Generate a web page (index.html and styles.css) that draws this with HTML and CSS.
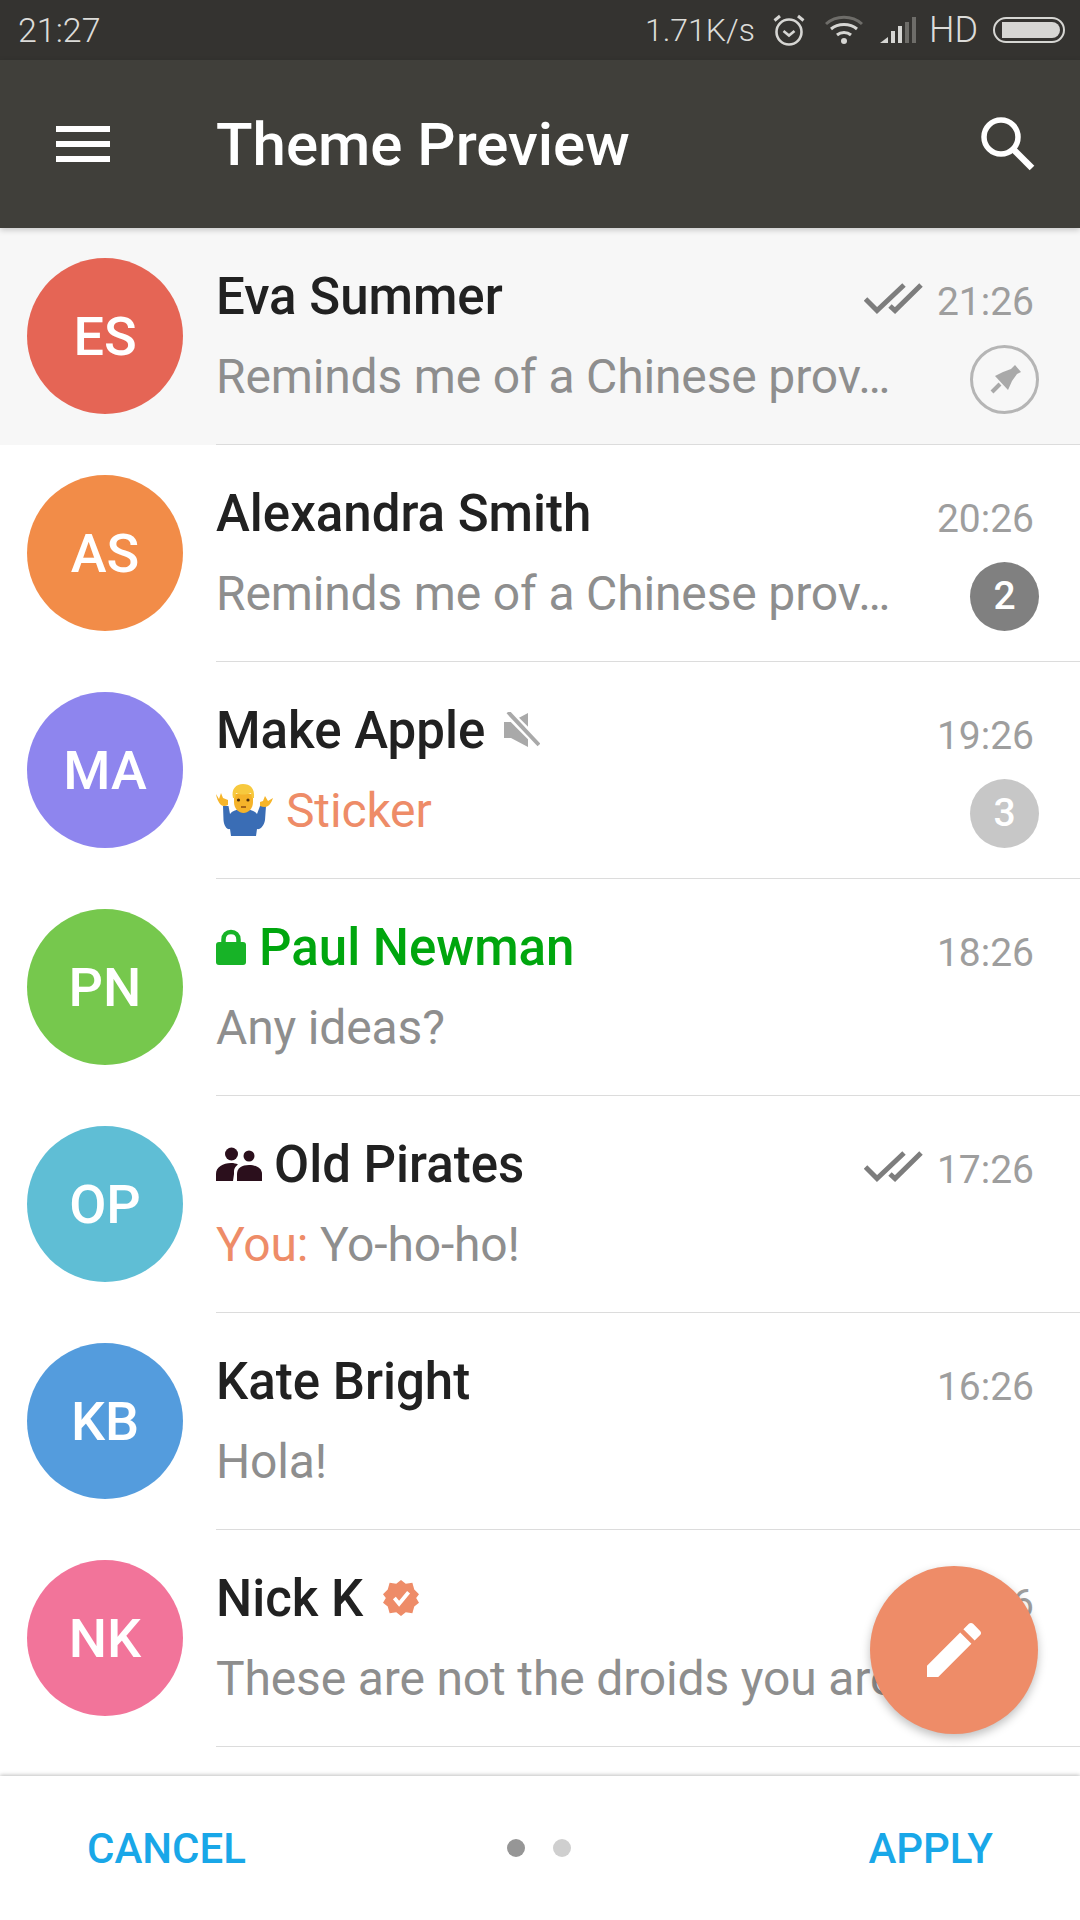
FILE: index.html
```html
<!DOCTYPE html>
<html lang="en">
  <head>
    <meta charset="UTF-8" />
    <meta name="viewport" content="width=device-width, initial-scale=1.0" />
    <title>Theme Preview</title>
    <link rel="stylesheet" href="styles.css">
  </head>
  <body>
    <div class="status-bar">
      <span class="status-time">21:27</span>
      <div class="status-right">
        <span class="status-speed">1.71K/s</span>
        <!-- alarm -->
        <svg class="alarm" width="32" height="32" viewBox="0 0 32 32" fill="none" stroke="#d6d6d3">
          <circle cx="16" cy="18" r="12.5" stroke-width="2.6"/>
          <path d="M10.5 17l5.5 4.5 5.5-4.5" stroke-width="2.6"/>
          <path d="M1.5 6.5L7 2M30.5 6.5L25 2" stroke-width="3"/>
        </svg>
        <!-- wifi -->
        <svg class="wifi" width="38" height="30" viewBox="0 0 38 30" fill="none" stroke="#d6d6d3" stroke-width="3">
          <path d="M1 9C11 0 27 0 37 9" stroke="#6e6d69"/>
          <path d="M6 14c7-6 19-6 26 0"/>
          <path d="M12 20c4-3.400 10-3.400 14 0"/>
          <circle cx="19" cy="26" r="3" fill="#d6d6d3" stroke="none"/>
        </svg>
        <!-- signal -->
        <svg class="signal" width="36" height="26" viewBox="0 0 36 26">
          <path d="M0 26L8 20V26Z" fill="#d6d6d3"/>
          <rect x="11" y="14" width="4" height="12" fill="#d6d6d3"/>
          <rect x="18" y="9" width="4" height="17" fill="#d6d6d3"/>
          <rect x="25" y="5" width="4" height="21" fill="#6e6d69"/>
          <rect x="32" y="0" width="4" height="26" fill="#6e6d69"/>
        </svg>
        <span class="status-hd">HD</span>
        <div class="battery"><div class="battery-fill"></div></div>
      </div>
    </div>

    <header class="toolbar">
      <div class="menu-icon"><span></span><span></span><span></span></div>
      <h1>Theme Preview</h1>
      <svg class="search-icon" width="56" height="56" viewBox="0 0 56 56" fill="none" stroke="#fff">
        <circle cx="21" cy="21" r="17" stroke-width="5.500"/>
        <path d="M33 33L52 52" stroke-width="6.500"/>
      </svg>
    </header>

    <main class="chat-list">
      <article class="chat pinned">
        <div class="avatar es">ES</div>
        <div class="chat-body">
          <div class="line">
            <h2 class="name">Eva Summer</h2>
            <svg class="checks" width="60" height="32" viewBox="0 0 60 32" fill="none" stroke="#7d7d7d" stroke-width="5">
              <path d="M1.500 17L13 28.500L40 3"/>
              <path d="M26 24L31 28.500L57 3"/>
            </svg>
            <span class="time">21:26</span>
          </div>
          <div class="line">
            <p class="msg">Reminds me of a Chinese prov…</p>
            <div class="pin-badge">
              <svg width="36" height="36" viewBox="0 0 36 36">
                <path d="M28 4L34 11L30 13L25 20L21 29L8 15L16 11L24 8Z" fill="#a9a9a9"/>
                <path d="M13 23L5 31" stroke="#a9a9a9" stroke-width="4"/>
              </svg>
            </div>
          </div>
        </div>
      </article>

      <article class="chat">
        <div class="avatar as">AS</div>
        <div class="chat-body">
          <div class="line">
            <h2 class="name">Alexandra Smith</h2>
            <span class="time">20:26</span>
          </div>
          <div class="line">
            <p class="msg">Reminds me of a Chinese prov…</p>
            <div class="badge">2</div>
          </div>
        </div>
      </article>

      <article class="chat">
        <div class="avatar ma">MA</div>
        <div class="chat-body">
          <div class="line">
            <h2 class="name">Make Apple</h2>
            <svg class="mute" width="36" height="36" viewBox="0 0 36 36">
              <path d="M0 10H7L24 1V35L7 26H0Z" fill="#a9a9a9"/>
              <path d="M2 -1L36 33" stroke="#fff" stroke-width="9"/>
              <path d="M4 0L35 33" stroke="#a9a9a9" stroke-width="4"/>
            </svg>
            <span class="time">19:26</span>
          </div>
          <div class="line">
            <p class="msg">
              <svg class="shrug" width="58" height="52" viewBox="0 -2 58 52">
                <!-- arms and sweater -->
                <path d="M7 20L12.500 20L14 28C16 25 20 24 24 23L31 23C35 24 39 25 41 28L44 20L50 20L49 34C48 40 44 44 41 43L40 50L15 50L14 43C11 44 8 40 7.500 34Z" fill="#3a6db5"/>
                <!-- hands -->
                <path d="M0 8L3 13L5 7L7 12L12 14L12 19Q8 21 5 19Q1 15 0 8Z" fill="#f6b52a"/>
                <path d="M57 12L52 15L49 10L47 15L44 16L44 20Q49 22 52 20Q55 18 57 12Z" fill="#f6b52a"/>
                <!-- head -->
                <path d="M18 8L18 16C18 23 23 27 27.500 27C32 27 37 23 37 16L37 8Z" fill="#f5b32a"/>
                <path d="M17 12C15 3 20 -2 27 -2C34 -2 39 2 38 12L36 12L35 7C30 9 24 9 20 7L19 12Z" fill="#f7c93e"/>
                <circle cx="22.500" cy="14" r="1.600" fill="#4a2c0c"/>
                <circle cx="32" cy="14" r="1.600" fill="#4a2c0c"/>
                <path d="M25 21H30" stroke="#8a4b12" stroke-width="1.500"/>
              </svg>
              <span class="accent">Sticker</span>
            </p>
            <div class="badge muted">3</div>
          </div>
        </div>
      </article>

      <article class="chat">
        <div class="avatar pn">PN</div>
        <div class="chat-body">
          <div class="line">
            <svg class="lock" width="30" height="36" viewBox="0 0 30 36">
              <path d="M7.500 16V10.500C7.500 6 10.500 3 15 3C19.500 3 22.500 6 22.500 10.500V16" fill="none" stroke="#17b327" stroke-width="4.500"/>
              <rect y="13" width="30" height="23" rx="3" fill="#17b327"/>
            </svg>
            <h2 class="name secret">Paul Newman</h2>
            <span class="time">18:26</span>
          </div>
          <div class="line">
            <p class="msg">Any ideas?</p>
          </div>
        </div>
      </article>

      <article class="chat">
        <div class="avatar op">OP</div>
        <div class="chat-body">
          <div class="line">
            <svg class="group" width="46" height="34" viewBox="0 0 46 34" fill="#2b0f1c">
              <circle cx="15.500" cy="7" r="6.500"/>
              <circle cx="33" cy="9" r="5.500"/>
              <path d="M0 34V27C0 20 7 16 15 16C18 16 20 16.500 22 17.500C20 19 18 21 18 24V27L17 34Z"/>
              <path d="M21 34V27C21 21 26 18 33 18C40 18 46 21 46 27V34Z"/>
            </svg>
            <h2 class="name">Old Pirates</h2>
            <svg class="checks" width="60" height="32" viewBox="0 0 60 32" fill="none" stroke="#7d7d7d" stroke-width="5">
              <path d="M1.500 17L13 28.500L40 3"/>
              <path d="M26 24L31 28.500L57 3"/>
            </svg>
            <span class="time">17:26</span>
          </div>
          <div class="line">
            <p class="msg"><span><span class="accent">You:</span> Yo-ho-ho!</span></p>
          </div>
        </div>
      </article>

      <article class="chat">
        <div class="avatar kb">KB</div>
        <div class="chat-body">
          <div class="line">
            <h2 class="name">Kate Bright</h2>
            <span class="time">16:26</span>
          </div>
          <div class="line">
            <p class="msg">Hola!</p>
          </div>
        </div>
      </article>

      <article class="chat">
        <div class="avatar nk">NK</div>
        <div class="chat-body">
          <div class="line">
            <h2 class="name">Nick K</h2>
            <svg class="verified" width="36" height="36" viewBox="0 0 38 38">
              <path d="M19 0L24 4L31 3L33 10L38 15L35 19L38 24L33 28L31 35L24 34L19 38L14 34L7 35L5 28L0 24L3 19L0 15L5 10L7 3L14 4Z" fill="#ee8c68"/>
              <path d="M12 19L17 25L27 13" fill="none" stroke="#fff" stroke-width="4"/>
            </svg>
            <span class="time">15:26</span>
          </div>
          <div class="line">
            <p class="msg">These are not the droids you are…</p>
          </div>
        </div>
      </article>

      <button class="fab">
        <svg width="72" height="72" viewBox="0 0 24 24" fill="#fff">
          <path d="M3 17.250V21h3.750L17.810 9.940l-3.750-3.750L3 17.250zM20.710 7.040c.39-.39.390-1.020 0-1.410l-2.340-2.340c-.39-.39-1.020-.39-1.410 0l-1.830 1.830 3.750 3.750 1.830-1.830z"/>
        </svg>
      </button>
    </main>

    <footer class="bottom-bar">
      <span class="action">CANCEL</span>
      <div class="dots"><span class="dot on"></span><span class="dot"></span></div>
      <span class="action apply">APPLY</span>
    </footer>
  </body>
</html>
```

FILE: styles.css
```css
* {
  box-sizing: border-box;
}

body {
  margin: 0;
  height: 1920px;
  display: flex;
  flex-direction: column;
  overflow: hidden;
  background-color: #fff;
  font-family: Roboto, "Liberation Sans", sans-serif;
}

/* status bar */
.status-bar {
  height: 60px;
  flex: none;
  display: flex;
  justify-content: space-between;
  align-items: center;
  padding: 0 15px 0 18px;
  background-color: #343330;
  color: #dcdcd9;
  font-size: 32px;
  font-weight: 300;
}

.status-time {
  font-size: 34px;
}

.status-right {
  display: flex;
  align-items: center;
}

.alarm {
  margin-left: 18px;
}

.wifi {
  margin-left: 20px;
}

.signal {
  margin-left: 17px;
}

.status-hd {
  margin-left: 13px;
  font-size: 36px;
}

.battery {
  width: 72px;
  height: 26px;
  margin-left: 15px;
  padding: 3px;
  border: 2px solid #d6d6d3;
  border-radius: 13px;
}

.battery-fill {
  height: 100%;
  margin-left: 4px;
  background-color: #d6d6d3;
  border-radius: 0 9px 9px 0;
}

/* toolbar */
.toolbar {
  height: 168px;
  flex: none;
  display: flex;
  align-items: center;
  padding: 0 44px 0 56px;
  background-color: #403f3a;
  box-shadow: 0 2px 6px rgba(0, 0, 0, 0.2);
  position: relative;
  z-index: 2;
}

.menu-icon {
  width: 54px;
  display: flex;
  flex-direction: column;
  gap: 9px;
}

.menu-icon span {
  height: 6px;
  background-color: #fff;
}

.toolbar h1 {
  flex: 1;
  margin: 0 0 0 106px;
  color: #fff;
  font-size: 60px;
  font-weight: 500;
}

/* chat rows */
.chat-list {
  flex: 1;
  position: relative;
  overflow: hidden;
}

.chat {
  height: 217px;
  display: flex;
  align-items: flex-start;
}

.chat.pinned {
  background-color: #f7f7f7;
}

.avatar {
  width: 156px;
  height: 156px;
  flex: none;
  margin: 30px 33px 0 27px;
  display: flex;
  align-items: center;
  justify-content: center;
  border-radius: 50%;
  color: #fff;
  font-size: 54px;
  font-weight: 500;
}

.es { background-color: #e56555; }
.as { background-color: #f28c48; }
.ma { background-color: #8e85ee; }
.pn { background-color: #76c84d; }
.op { background-color: #5fbed5; }
.kb { background-color: #549cdd; }
.nk { background-color: #f2749a; }

.chat-body {
  flex: 1;
  min-width: 0;
  height: 217px;
  padding: 38px 41px 0 0;
  border-bottom: 1px solid #dcdcdc;
  display: flex;
  flex-direction: column;
  gap: 20px;
}

.line {
  height: 60px;
  display: flex;
  align-items: center;
}

.name {
  margin: 0;
  color: #212121;
  font-size: 51px;
  font-weight: 500;
  white-space: nowrap;
}

.name.secret {
  color: #00a60e;
}

.time {
  margin-left: auto;
  padding: 12px 5px 0 0;
  color: #9e9e9e;
  font-size: 39px;
}

.checks {
  margin: 4px 0 0 auto;
}

.checks + .time {
  margin-left: 13px;
}

.msg {
  margin: 0;
  flex: 1;
  min-width: 0;
  color: #8e8e8e;
  font-size: 48px;
  letter-spacing: -0.15px;
  white-space: nowrap;
  display: flex;
  align-items: center;
  gap: 12px;
}

.accent {
  color: #ee8c68;
}

.badge,
.pin-badge {
  width: 69px;
  height: 69px;
  flex: none;
  margin-top: 6px;
  display: flex;
  align-items: center;
  justify-content: center;
  border-radius: 50%;
  background-color: #808080;
  color: #fff;
  font-size: 39px;
  font-weight: 500;
}

.badge.muted {
  background-color: #c7c7c7;
}

.pin-badge {
  background: none;
  border: 3px solid #b5b5b5;
}

.mute {
  margin-left: 19px;
}

.lock {
  margin-right: 13px;
}

.group {
  margin-right: 12px;
}

.verified {
  margin-left: 20px;
}

/* compose button, sits over the last row */
.fab {
  width: 168px;
  height: 168px;
  padding: 0;
  position: absolute;
  right: 42px;
  bottom: 42px;
  display: flex;
  align-items: center;
  justify-content: center;
  border: none;
  border-radius: 50%;
  background-color: #ee8c68;
  box-shadow: 0 4px 10px rgba(0, 0, 0, 0.25);
}

/* bottom bar */
.bottom-bar {
  height: 144px;
  flex: none;
  display: grid;
  grid-template-columns: 1fr auto 1fr;
  align-items: center;
  padding: 0 87px;
  background-color: #fff;
  box-shadow: 0 -1px 4px rgba(0, 0, 0, 0.25);
  position: relative;
  z-index: 2;
}

.action {
  color: #19a7e8;
  font-size: 42px;
  font-weight: 500;
}

.action.apply {
  justify-self: end;
}

.dots {
  display: flex;
  gap: 28px;
  margin-left: -2px;
}

.dot {
  width: 18px;
  height: 18px;
  border-radius: 50%;
  background-color: #cfcfcf;
}

.dot.on {
  background-color: #969696;
}
```
